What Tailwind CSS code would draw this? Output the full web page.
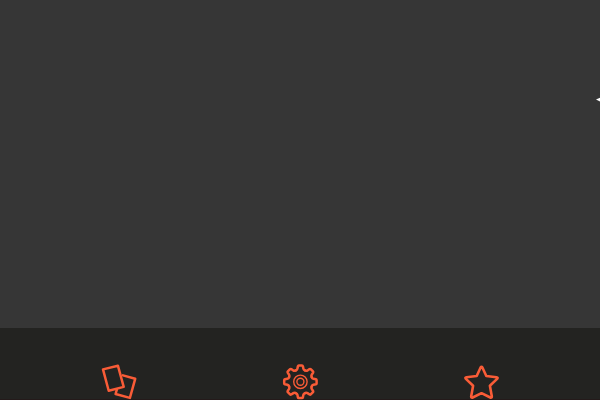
<!DOCTYPE html>
<html lang="en">
<head>
<meta charset="utf-8">
<meta name="viewport" content="width=device-width, initial-scale=1">
<title>Features</title>
<script src="https://cdn.jsdelivr.net/npm/@tailwindcss/browser@4"></script>
</head>
<body class="flex h-screen flex-col overflow-hidden bg-[#363636]">
<main class="relative flex-1 overflow-hidden" aria-label="Slides">
  <button type="button" aria-label="Next slide" class="absolute top-[91px] -right-4 h-4 w-5">
    <svg class="block h-4 w-5" viewBox="0 0 20 16" fill="#fff"><path d="M0 8.6 10 3.8v9.6z"/></svg>
  </button>
</main>
<section class="border-b border-[#241a1a] bg-[#232321] px-7 pt-9" aria-label="Features">
  <ul class="grid h-[35px] grid-cols-3 justify-items-center text-[#f95c37]">
    <li>
      <svg class="block size-9" viewBox="0 0 36 36" fill="none" stroke="currentColor" stroke-width="2.5" stroke-linejoin="round" stroke-linecap="round" aria-hidden="true">
        <path d="M2 5.4 16.9 1.7 22.7 22.9 7.7 26.7z"/>
        <path d="M22 11.4 34.2 14.8 28.9 33.9 14.6 30 15.8 25.6"/>
      </svg>
    </li>
    <li>
      <svg class="block size-9" viewBox="-18.4 -17.8 36 36" fill="none" stroke="currentColor" stroke-width="2.5" stroke-linejoin="round" stroke-linecap="round" aria-hidden="true">
        <defs><path id="tooth" d="M-4.7 -11.3C-3.6 -11.7 -3.2 -12 -3 -13L-2.5 -15.5Q-2.3 -16.2 -1.6 -16.2H1.6Q2.3 -16.2 2.5 -15.5L3 -13C3.2 -12 3.6 -11.7 4.7 -11.3"/></defs>
        <use href="#tooth"/>
        <use href="#tooth" transform="rotate(45)"/>
        <use href="#tooth" transform="rotate(90)"/>
        <use href="#tooth" transform="rotate(135)"/>
        <use href="#tooth" transform="rotate(180)"/>
        <use href="#tooth" transform="rotate(225)"/>
        <use href="#tooth" transform="rotate(270)"/>
        <use href="#tooth" transform="rotate(315)"/>
        <circle r="6.7" stroke-width="1.4"/>
        <circle r="3.5" stroke-width="1.4"/>
      </svg>
    </li>
    <li>
      <svg class="block size-9" viewBox="-0.5 0 36 36" fill="none" stroke="currentColor" stroke-width="2.6" stroke-linejoin="round" aria-hidden="true">
        <path d="M17.1 3.5Q18 2.1 18.9 3.5L22.8 12 33 13.2Q34.8 13.5 33.6 14.9L26.4 21.7 28.3 32.2Q28.4 34.1 26.8 33.5L18 29.2 9.2 33.5Q7.6 34.1 7.7 32.2L9.6 21.7 2.4 14.9Q1.2 13.5 3 13.2L13.2 12Z"/>
      </svg>
    </li>
  </ul>
</section>
</body>
</html>
